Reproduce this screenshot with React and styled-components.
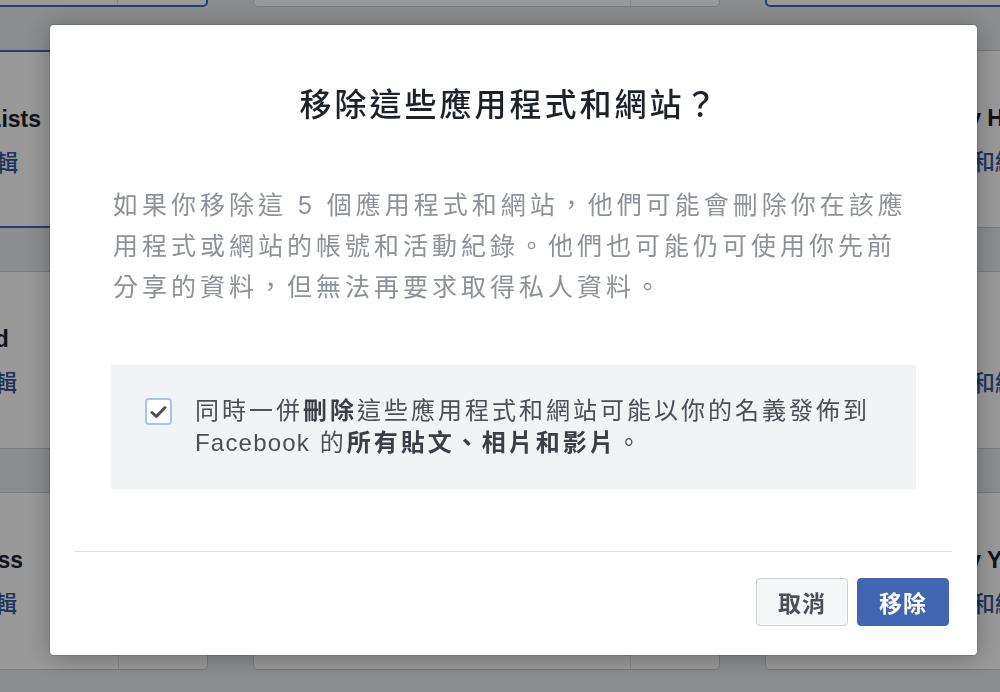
import React from "react";
import styled, { createGlobalStyle } from "styled-components";

const GlobalStyle = createGlobalStyle`
  html, body {
    margin: 0;
    padding: 0;
    width: 1000px;
    height: 692px;
    overflow: hidden;
    background: #e9ebee;
    font-family: "Liberation Sans", "Noto Sans CJK TC", sans-serif;
  }
`;

// 背景的應用程式卡片
const Board = styled.div`
  display: grid;
  grid-template-columns: repeat(3, 467px);
  grid-auto-rows: 178px;
  column-gap: 45px;
  row-gap: 43px;
  margin: -171px 0 0 -259px;
`;

const Tile = styled.div`
  display: flex;
  box-sizing: border-box;
  background: #fff;
  border-radius: 5px;
  border: ${(p) => (p.$selected ? "2px solid #4267b2" : "1px solid #ccd0d5")};
  overflow: hidden;
`;

const TileMain = styled.div`
  flex: 1;
  display: flex;
  flex-direction: column;
  gap: 14px;
  padding: 53px 0 0 160px;
`;

const TileSide = styled.div`
  width: 88px;
  border-left: 1px solid #dddfe2;
`;

const AppName = styled.div`
  font-size: 23px;
  line-height: 28px;
  font-weight: 700;
  color: #1d2129;
  white-space: nowrap;
`;

const AppLink = styled.div`
  font-family: "Noto Sans CJK TC", sans-serif;
  font-size: 23px;
  line-height: 28px;
  font-weight: 500;
  color: #365899;
  white-space: nowrap;
`;

const Overlay = styled.div`
  position: fixed;
  inset: 0;
  background: rgba(0, 0, 0, 0.4);
`;

const Modal = styled.div`
  position: absolute;
  left: 50px;
  top: 25px;
  width: 927px;
  height: 630px;
  box-sizing: border-box;
  background: #fff;
  border-radius: 4px;
  box-shadow: 0 2px 26px rgba(0, 0, 0, 0.3), 0 0 0 1px rgba(0, 0, 0, 0.1);
  display: flex;
  flex-direction: column;
`;

const Title = styled.h2`
  margin: 57px 0 0;
  padding-right: 8px;
  text-align: center;
  font-family: "Noto Sans CJK TC", sans-serif;
  font-size: 32px;
  line-height: 40px;
  font-weight: 500;
  letter-spacing: 3px;
  color: #1d2129;
`;

const Body = styled.div`
  padding: 0 61px;
`;

const Message = styled.p`
  margin: 63px 0 0 2px;
  font-size: 25px;
  line-height: 41px;
  letter-spacing: 4px;
  color: #8d9199;
  white-space: nowrap;
`;

const OptionPanel = styled.div`
  margin-top: 57px;
  display: flex;
  align-items: flex-start;
  gap: 23px;
  padding: 30px 34px;
  background: #f2f3f5;
`;

const Check = styled.span`
  flex: none;
  width: 27px;
  height: 27px;
  margin-top: 3px;
  box-sizing: border-box;
  border: 2px solid #a8c3ef;
  border-radius: 4px;
  background: #fff;
  display: flex;
  align-items: center;
  justify-content: center;
`;

const OptionText = styled.div`
  font-size: 24px;
  line-height: 32px;
  letter-spacing: 3px;
  color: #4b4f56;
  white-space: nowrap;

  b {
    font-weight: 700;
    color: #3b3e44;
  }
`;

const Latin = styled.span`
  letter-spacing: 1.2px;
`;

const Divider = styled.hr`
  margin: 62px 25px 0;
  border: none;
  border-top: 1px solid #dddfe2;
`;

const Footer = styled.div`
  display: flex;
  justify-content: flex-end;
  gap: 9px;
  padding: 26px 28px 0;
`;

const Button = styled.button`
  width: 92px;
  height: 48px;
  box-sizing: border-box;
  border-radius: 4px;
  border: 1px solid ${(p) => (p.$primary ? "#4267b2" : "#ccd0d5")};
  background: ${(p) => (p.$primary ? "#4267b2" : "#f5f6f7")};
  color: ${(p) => (p.$primary ? "#fff" : "#4b4f56")};
  font-family: "Noto Sans CJK TC", sans-serif;
  font-size: 23px;
  font-weight: 700;
  letter-spacing: 1px;
  padding: 0;
`;

const columns = [
  [
    { name: "Candy Quiz", selected: true },
    { name: "Spotify Lists", selected: true },
    { name: "Pet World" },
    { name: "WordPress" },
  ],
  [
    { name: "Instagram" },
    { name: "Pinterest" },
    { name: "Messenger" },
    { name: "Flickr" },
  ],
  [
    { name: "Daily Quiz", selected: true },
    { name: "Daily H" },
    { name: "Mix" },
    { name: "Daily Y" },
  ],
];

// 以列為序排入格線
const tiles = [0, 1, 2, 3].flatMap((row) => columns.map((col) => col[row]));

const App = () => {
  return (
    <>
      <GlobalStyle />
      <Board>
        {tiles.map((t, i) => (
          <Tile key={i} $selected={t.selected}>
            <TileMain>
              <AppName>{t.name}</AppName>
              <AppLink>檢視和編輯</AppLink>
            </TileMain>
            <TileSide />
          </Tile>
        ))}
      </Board>
      <Overlay>
        <Modal>
          <Title>移除這些應用程式和網站？</Title>
          <Body>
            <Message>
              如果你移除這 5 個應用程式和網站，他們可能會刪除你在該應
              <br />
              用程式或網站的帳號和活動紀錄。他們也可能仍可使用你先前
              <br />
              分享的資料，但無法再要求取得私人資料。
            </Message>
            <OptionPanel>
              <Check>
                <svg width="17" height="14" viewBox="0 0 17 14">
                  <path
                    d="M2 7.5 L6.3 11.5 L15 2.5"
                    fill="none"
                    stroke="#4b4f56"
                    strokeWidth="3"
                    strokeLinecap="round"
                    strokeLinejoin="round"
                  />
                </svg>
              </Check>
              <OptionText>
                同時一併<b>刪除</b>這些應用程式和網站可能以你的名義發佈到
                <br />
                <Latin>Facebook</Latin> 的<b>所有貼文、相片和影片</b>。
              </OptionText>
            </OptionPanel>
          </Body>
          <Divider />
          <Footer>
            <Button>取消</Button>
            <Button $primary>移除</Button>
          </Footer>
        </Modal>
      </Overlay>
    </>
  );
};

export default App;
